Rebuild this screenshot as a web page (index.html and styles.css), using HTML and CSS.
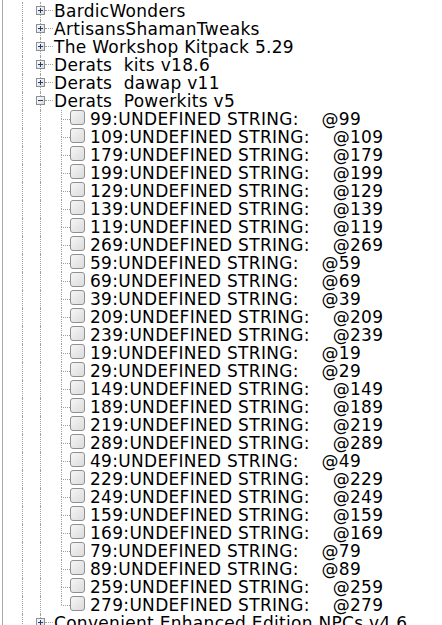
FILE: index.html
```html
<!DOCTYPE html>
<html>
<head>
<meta charset="utf-8">
<link rel="stylesheet" href="styles.css">
</head>
<body>
<div class="tree">
  <div class="row parent"><span class="g0"></span><span class="sp"></span><span class="tog"><span class="vl top"></span><svg class="box" width="9" height="9" viewBox="0 0 9 9"><defs><linearGradient id="bg" x1="0" y1="0" x2="1" y2="1"><stop offset="0" stop-color="#ffffff"/><stop offset="1" stop-color="#d8d8d8"/></linearGradient></defs><rect x="0.5" y="0.5" width="8" height="8" fill="url(#bg)" stroke="#8e8f8f"/><path d="M2 4.5H7M4.5 2V7" stroke="#1e3a78"/></svg><span class="vl bot"></span></span><span class="hc"></span><span class="label">BardicWonders</span></div>
  <div class="row parent"><span class="g0"></span><span class="sp"></span><span class="tog"><span class="vl top"></span><svg class="box" width="9" height="9" viewBox="0 0 9 9"><rect x="0.5" y="0.5" width="8" height="8" fill="url(#bg)" stroke="#8e8f8f"/><path d="M2 4.5H7M4.5 2V7" stroke="#1e3a78"/></svg><span class="vl bot"></span></span><span class="hc"></span><span class="label">ArtisansShamanTweaks</span></div>
  <div class="row parent"><span class="g0"></span><span class="sp"></span><span class="tog"><span class="vl top"></span><svg class="box" width="9" height="9" viewBox="0 0 9 9"><rect x="0.5" y="0.5" width="8" height="8" fill="url(#bg)" stroke="#8e8f8f"/><path d="M2 4.5H7M4.5 2V7" stroke="#1e3a78"/></svg><span class="vl bot"></span></span><span class="hc"></span><span class="label">The Workshop Kitpack 5.29</span></div>
  <div class="row parent"><span class="g0"></span><span class="sp"></span><span class="tog"><span class="vl top"></span><svg class="box" width="9" height="9" viewBox="0 0 9 9"><rect x="0.5" y="0.5" width="8" height="8" fill="url(#bg)" stroke="#8e8f8f"/><path d="M2 4.5H7M4.5 2V7" stroke="#1e3a78"/></svg><span class="vl bot"></span></span><span class="hc"></span><span class="label">Derats  kits v18.6</span></div>
  <div class="row parent"><span class="g0"></span><span class="sp"></span><span class="tog"><span class="vl top"></span><svg class="box" width="9" height="9" viewBox="0 0 9 9"><rect x="0.5" y="0.5" width="8" height="8" fill="url(#bg)" stroke="#8e8f8f"/><path d="M2 4.5H7M4.5 2V7" stroke="#1e3a78"/></svg><span class="vl bot"></span></span><span class="hc"></span><span class="label">Derats  dawap v11</span></div>
  <div class="row parent"><span class="g0"></span><span class="sp"></span><span class="tog"><span class="vl top"></span><svg class="box" width="9" height="9" viewBox="0 0 9 9"><rect x="0.5" y="0.5" width="8" height="8" fill="url(#bg)" stroke="#8e8f8f"/><path d="M2 4.5H7" stroke="#1e3a78"/></svg><span class="vl bot"></span></span><span class="hc"></span><span class="label">Derats  Powerkits v5</span></div>

  <div class="row child"><span class="g0"></span><span class="g1"></span><span class="sp2"></span><span class="elbow"><span class="eu"></span><span class="ed"></span></span><span class="chk"></span><span class="label">99:UNDEFINED STRING:    @99</span></div>
  <div class="row child"><span class="g0"></span><span class="g1"></span><span class="sp2"></span><span class="elbow"><span class="eu"></span><span class="ed"></span></span><span class="chk"></span><span class="label">109:UNDEFINED STRING:    @109</span></div>
  <div class="row child"><span class="g0"></span><span class="g1"></span><span class="sp2"></span><span class="elbow"><span class="eu"></span><span class="ed"></span></span><span class="chk"></span><span class="label">179:UNDEFINED STRING:    @179</span></div>
  <div class="row child"><span class="g0"></span><span class="g1"></span><span class="sp2"></span><span class="elbow"><span class="eu"></span><span class="ed"></span></span><span class="chk"></span><span class="label">199:UNDEFINED STRING:    @199</span></div>
  <div class="row child"><span class="g0"></span><span class="g1"></span><span class="sp2"></span><span class="elbow"><span class="eu"></span><span class="ed"></span></span><span class="chk"></span><span class="label">129:UNDEFINED STRING:    @129</span></div>
  <div class="row child"><span class="g0"></span><span class="g1"></span><span class="sp2"></span><span class="elbow"><span class="eu"></span><span class="ed"></span></span><span class="chk"></span><span class="label">139:UNDEFINED STRING:    @139</span></div>
  <div class="row child"><span class="g0"></span><span class="g1"></span><span class="sp2"></span><span class="elbow"><span class="eu"></span><span class="ed"></span></span><span class="chk"></span><span class="label">119:UNDEFINED STRING:    @119</span></div>
  <div class="row child"><span class="g0"></span><span class="g1"></span><span class="sp2"></span><span class="elbow"><span class="eu"></span><span class="ed"></span></span><span class="chk"></span><span class="label">269:UNDEFINED STRING:    @269</span></div>
  <div class="row child"><span class="g0"></span><span class="g1"></span><span class="sp2"></span><span class="elbow"><span class="eu"></span><span class="ed"></span></span><span class="chk"></span><span class="label">59:UNDEFINED STRING:    @59</span></div>
  <div class="row child"><span class="g0"></span><span class="g1"></span><span class="sp2"></span><span class="elbow"><span class="eu"></span><span class="ed"></span></span><span class="chk"></span><span class="label">69:UNDEFINED STRING:    @69</span></div>
  <div class="row child"><span class="g0"></span><span class="g1"></span><span class="sp2"></span><span class="elbow"><span class="eu"></span><span class="ed"></span></span><span class="chk"></span><span class="label">39:UNDEFINED STRING:    @39</span></div>
  <div class="row child"><span class="g0"></span><span class="g1"></span><span class="sp2"></span><span class="elbow"><span class="eu"></span><span class="ed"></span></span><span class="chk"></span><span class="label">209:UNDEFINED STRING:    @209</span></div>
  <div class="row child"><span class="g0"></span><span class="g1"></span><span class="sp2"></span><span class="elbow"><span class="eu"></span><span class="ed"></span></span><span class="chk"></span><span class="label">239:UNDEFINED STRING:    @239</span></div>
  <div class="row child"><span class="g0"></span><span class="g1"></span><span class="sp2"></span><span class="elbow"><span class="eu"></span><span class="ed"></span></span><span class="chk"></span><span class="label">19:UNDEFINED STRING:    @19</span></div>
  <div class="row child"><span class="g0"></span><span class="g1"></span><span class="sp2"></span><span class="elbow"><span class="eu"></span><span class="ed"></span></span><span class="chk"></span><span class="label">29:UNDEFINED STRING:    @29</span></div>
  <div class="row child"><span class="g0"></span><span class="g1"></span><span class="sp2"></span><span class="elbow"><span class="eu"></span><span class="ed"></span></span><span class="chk"></span><span class="label">149:UNDEFINED STRING:    @149</span></div>
  <div class="row child"><span class="g0"></span><span class="g1"></span><span class="sp2"></span><span class="elbow"><span class="eu"></span><span class="ed"></span></span><span class="chk"></span><span class="label">189:UNDEFINED STRING:    @189</span></div>
  <div class="row child"><span class="g0"></span><span class="g1"></span><span class="sp2"></span><span class="elbow"><span class="eu"></span><span class="ed"></span></span><span class="chk"></span><span class="label">219:UNDEFINED STRING:    @219</span></div>
  <div class="row child"><span class="g0"></span><span class="g1"></span><span class="sp2"></span><span class="elbow"><span class="eu"></span><span class="ed"></span></span><span class="chk"></span><span class="label">289:UNDEFINED STRING:    @289</span></div>
  <div class="row child"><span class="g0"></span><span class="g1"></span><span class="sp2"></span><span class="elbow"><span class="eu"></span><span class="ed"></span></span><span class="chk"></span><span class="label">49:UNDEFINED STRING:    @49</span></div>
  <div class="row child"><span class="g0"></span><span class="g1"></span><span class="sp2"></span><span class="elbow"><span class="eu"></span><span class="ed"></span></span><span class="chk"></span><span class="label">229:UNDEFINED STRING:    @229</span></div>
  <div class="row child"><span class="g0"></span><span class="g1"></span><span class="sp2"></span><span class="elbow"><span class="eu"></span><span class="ed"></span></span><span class="chk"></span><span class="label">249:UNDEFINED STRING:    @249</span></div>
  <div class="row child"><span class="g0"></span><span class="g1"></span><span class="sp2"></span><span class="elbow"><span class="eu"></span><span class="ed"></span></span><span class="chk"></span><span class="label">159:UNDEFINED STRING:    @159</span></div>
  <div class="row child"><span class="g0"></span><span class="g1"></span><span class="sp2"></span><span class="elbow"><span class="eu"></span><span class="ed"></span></span><span class="chk"></span><span class="label">169:UNDEFINED STRING:    @169</span></div>
  <div class="row child"><span class="g0"></span><span class="g1"></span><span class="sp2"></span><span class="elbow"><span class="eu"></span><span class="ed"></span></span><span class="chk"></span><span class="label">79:UNDEFINED STRING:    @79</span></div>
  <div class="row child"><span class="g0"></span><span class="g1"></span><span class="sp2"></span><span class="elbow"><span class="eu"></span><span class="ed"></span></span><span class="chk"></span><span class="label">89:UNDEFINED STRING:    @89</span></div>
  <div class="row child"><span class="g0"></span><span class="g1"></span><span class="sp2"></span><span class="elbow"><span class="eu"></span><span class="ed"></span></span><span class="chk"></span><span class="label">259:UNDEFINED STRING:    @259</span></div>
  <div class="row child last"><span class="g0"></span><span class="g1"></span><span class="sp2"></span><span class="elbow"><span class="eu"></span><span class="ed"></span></span><span class="chk"></span><span class="label">279:UNDEFINED STRING:    @279</span></div>

  <div class="row parent"><span class="g0"></span><span class="sp"></span><span class="tog"><span class="vl top"></span><svg class="box" width="9" height="9" viewBox="0 0 9 9"><rect x="0.5" y="0.5" width="8" height="8" fill="url(#bg)" stroke="#8e8f8f"/><path d="M2 4.5H7M4.5 2V7" stroke="#1e3a78"/></svg><span class="vl bot"></span></span><span class="hc"></span><span class="label">Convenient Enhanced Edition NPCs v4.6</span></div>
</div>
</body>
</html>
```

FILE: styles.css
```css
html, body {
  margin: 0;
  padding: 0;
  background: #ffffff;
  overflow: hidden;
}

.tree {
  margin-left: 2px;
  border-left: 1px solid #a9a9a9;
  height: 625px;
  padding-top: 2px;
  box-sizing: border-box;
  overflow: hidden;
  font-family: "DejaVu Sans", Verdana, sans-serif;
  font-size: 17px;
  letter-spacing: 0.3px;
  color: #000000;
}

.row {
  display: flex;
  align-items: flex-start;
  height: 18px;
  line-height: 18px;
}

.g0 {
  flex: none;
  width: 19px;
  height: 18px;
  border-right: 1px dotted #a0a0a0;
}

.sp {
  flex: none;
  width: 13px;
  height: 18px;
}

.tog {
  flex: none;
  width: 9px;
  height: 18px;
  display: flex;
  flex-direction: column;
  align-items: center;
}

.vl {
  display: block;
  width: 0;
  border-left: 1px dotted #a0a0a0;
}

.vl.top { height: 4px; }
.vl.bot { height: 5px; }

.box {
  display: block;
  flex: none;
}

.hc {
  flex: none;
  width: 8px;
  height: 0;
  margin-top: 8px;
  border-top: 1px dotted #a0a0a0;
}

.parent .label {
  margin-left: 1px;
}

.label {
  white-space: pre;
  height: 18px;
}

.g1 {
  flex: none;
  width: 17px;
  height: 18px;
  border-right: 1px dotted #a0a0a0;
}

.sp2 {
  flex: none;
  width: 20px;
  height: 18px;
}

.elbow {
  flex: none;
  width: 9px;
  height: 18px;
  display: flex;
  flex-direction: column;
}

.eu {
  display: block;
  height: 9px;
  border-left: 1px dotted #a0a0a0;
}

.ed {
  display: block;
  height: 8px;
  border-left: 1px dotted #a0a0a0;
  border-top: 1px dotted #a0a0a0;
}

.last .ed {
  border-left-color: transparent;
}

.chk {
  flex: none;
  width: 15px;
  height: 15px;
  box-sizing: border-box;
  border: 1px solid #8f8f8f;
  border-radius: 3px;
  background: linear-gradient(135deg, #f6f6f6 0%, #e6e6e6 60%, #dcdcdc 100%);
}

.child .label {
  margin-left: 5px;
}
```
